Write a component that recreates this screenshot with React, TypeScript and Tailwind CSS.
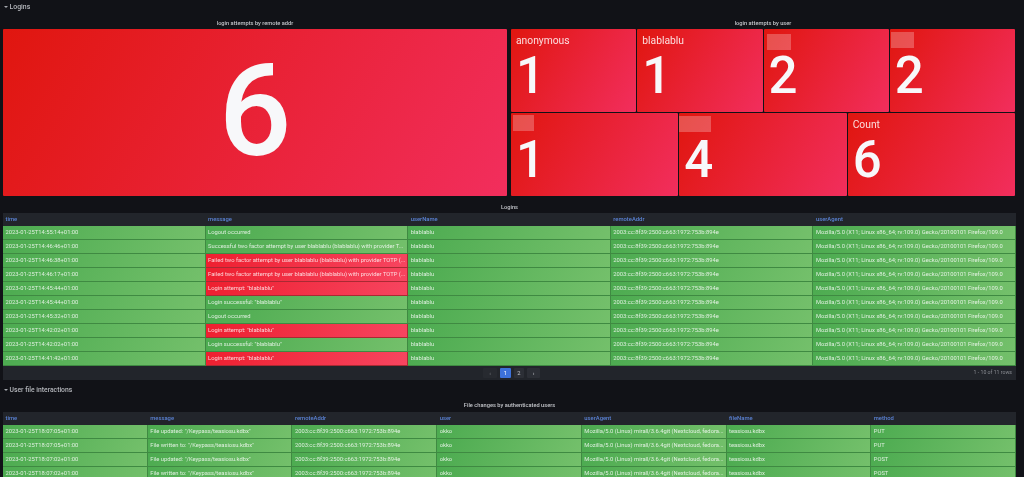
const FONT = "font-['Roboto',sans-serif]"

const LOGIN_ROWS: [string, string, boolean][] = [
  ['2023-01-25T14:55:14+01:00', 'Logout occurred', false],
  ['2023-01-25T14:46:46+01:00', 'Successful two factor attempt by user blablablu (blablablu) with provider T...', false],
  ['2023-01-25T14:46:38+01:00', 'Failed two factor attempt by user blablablu (blablablu) with provider TOTP (...', true],
  ['2023-01-25T14:46:17+01:00', 'Failed two factor attempt by user blablablu (blablablu) with provider TOTP (...', true],
  ['2023-01-25T14:45:44+01:00', 'Login attempt: "blablablu"', true],
  ['2023-01-25T14:45:44+01:00', 'Login successful: "blablablu"', false],
  ['2023-01-25T14:45:32+01:00', 'Logout occurred', false],
  ['2023-01-25T14:42:02+01:00', 'Login attempt: "blablablu"', true],
  ['2023-01-25T14:42:02+01:00', 'Login successful: "blablablu"', false],
  ['2023-01-25T14:41:42+01:00', 'Login attempt: "blablablu"', true],
]

const FILE_ROWS = [
  ['2023-01-25T18:07:05+01:00', 'File updated: "/Keypass/teasiosu.kdbx"', 'PUT'],
  ['2023-01-25T18:07:05+01:00', 'File written to: "/Keypass/teasiosu.kdbx"', 'PUT'],
  ['2023-01-25T18:07:02+01:00', 'File updated: "/Keypass/teasiosu.kdbx"', 'POST'],
  ['2023-01-25T18:07:02+01:00', 'File written to: "/Keypass/teasiosu.kdbx"', 'POST'],
]

const ADDR = '2003:cc:8f39:2500:c663:1972:753b:894e'
const UA = 'Mozilla/5.0 (X11; Linux x86_64; rv:109.0) Gecko/20100101 Firefox/109.0'
const UA_SHORT = 'Mozilla/5.0 (Linux) mirall/3.6.4git (Nextcloud, fedora...'

function Cell({ text, red }: { text: string; red?: boolean }) {
  return (
    <div className={`min-w-0 h-[14px] flex items-center pl-[2.5px] pt-[0.5px] border-r border-b overflow-hidden whitespace-nowrap text-[5.8px] text-white/80 ${
      red
        ? 'bg-[linear-gradient(120deg,#ee1f2f,#f74560)] border-[#a92a33]'
        : 'bg-[linear-gradient(120deg,#4cab50,#74c06b)] border-[#3f8a42]'
    }`}>
      {text}
    </div>
  )
}

function HeaderRow({ names, cols }: { names: string[]; cols: string }) {
  return (
    <div className={`grid ${cols} h-[13px] bg-[#22252b]`}>
      {names.map(n => (
        <div key={n} className="px-[2.5px] flex items-center text-[5.85px] font-medium text-[#5b83d6]">{n}</div>
      ))}
    </div>
  )
}

function Tile({ label, value, block }: { label?: string; value: number; block?: string }) {
  return (
    <div className="relative rounded-[1px] bg-[linear-gradient(120deg,#e0160f,#f22e5d)] text-[#f7f8fa] pl-[5px]">
      <div className="h-[18px] pt-[7px] text-[10.3px] leading-none text-white/85">{label}</div>
      {block && <div className={`absolute ${block} bg-white/25`} />}
      <div className="mt-[3px] text-[51px] leading-none font-medium">{value}</div>
    </div>
  )
}

function Caret() {
  return <span className="inline-block mr-[1.5px] mb-[1px] w-0 h-0 border-x-[2.5px] border-x-transparent border-t-[2.5px] border-t-[#a5a7ad]" />
}

export default function App() {
  return (
    <div className={`h-[477px] w-[1024px] overflow-hidden bg-[#111217] blur-[0.3px] ${FONT}`}>
      <div className="h-[14px] pl-[4px] flex items-center text-[6.9px] font-medium text-[#b5b7bc]">
        <Caret />Logins
      </div>

      <div className="flex pl-[3px] pr-[9px] gap-[4px] mt-[4px]">
        <div className="w-[504px]">
          <div className="h-[11px] flex items-center justify-center text-[5.7px] font-medium text-[#c3c5ca]">login attempts by remote addr</div>
          <div className="h-[167px] pb-[4px] flex items-center justify-center rounded-[1px] bg-[linear-gradient(120deg,#e0160f,#f22e5d)] text-[#f7f8fa] text-[128px] font-medium leading-none">6</div>
        </div>
        <div className="w-[504px]">
          <div className="h-[11px] flex items-center justify-center text-[5.7px] font-medium text-[#c3c5ca]">login attempts by user</div>
          <div className="h-[167px] flex flex-col gap-[1px]">
            <div className="grid grid-cols-4 gap-[1px] h-[83px]">
              <Tile label="anonymous" value={1} />
              <Tile label="blablablu" value={1} />
              <Tile value={2} block="left-[3px] top-[5px] w-[24px] h-[16px]" />
              <Tile value={2} block="left-[1px] top-[3px] w-[23px] h-[16px]" />
            </div>
            <div className="grid grid-cols-3 gap-[1px] h-[83px]">
              <Tile value={1} block="left-[2px] top-[2px] w-[21px] h-[16px]" />
              <Tile value={4} block="left-0 top-[3px] w-[32px] h-[16px]" />
              <Tile label="Count" value={6} />
            </div>
          </div>
        </div>
      </div>

      <div className="mt-[5px] pl-[3px] pr-[8px]">
        <div className="h-[12px] flex items-center justify-center text-[5.7px] font-medium text-[#c3c5ca]">Logins</div>
        <HeaderRow cols="grid-cols-5" names={['time', 'message', 'userName', 'remoteAddr', 'userAgent']} />
        {LOGIN_ROWS.map(([time, msg, red], i) => (
          <div key={i} className="grid grid-cols-5">
            <Cell text={time} />
            <Cell text={msg} red={red} />
            <Cell text="blablablu" />
            <Cell text={ADDR} />
            <Cell text={UA} />
          </div>
        ))}
        <div className="relative h-[14px] pl-[4px] bg-[#22252b] flex items-center justify-center gap-[3px] text-[5.8px] text-[#c3c5ca]">
          <span className="w-[14px] h-[10px] rounded-[1px] bg-[#272a30] text-[#777a80] flex items-center justify-center">‹</span>
          <span className="w-[11px] h-[10px] rounded-[1px] bg-[#3d71d9] flex items-center justify-center text-white">1</span>
          <span className="w-[10px] h-[10px] rounded-[1px] bg-[#2c2f36] flex items-center justify-center">2</span>
          <span className="w-[13px] h-[10px] rounded-[1px] bg-[#2c2f36] flex items-center justify-center">›</span>
          <span className="absolute right-[4px] text-[5.2px] text-[#8a8d93]">1 - 10 of 11 rows</span>
        </div>
      </div>

      <div className="h-[17px] mt-[2px] pl-[4px] flex items-center text-[6.8px] font-medium text-[#b5b7bc]">
        <Caret />User file interactions
      </div>

      <div className="pl-[3px] pr-[8px]">
        <div className="h-[13px] flex items-center justify-center text-[5.7px] font-medium text-[#c3c5ca]">File changes by authenticated users</div>
        <HeaderRow cols="grid-cols-7" names={['time', 'message', 'remoteAddr', 'user', 'userAgent', 'fileName', 'method']} />
        {FILE_ROWS.map(([time, msg, method], i) => (
          <div key={i} className="grid grid-cols-7">
            <Cell text={time} />
            <Cell text={msg} />
            <Cell text={ADDR} />
            <Cell text="okko" />
            <Cell text={UA_SHORT} />
            <Cell text="teasiosu.kdbx" />
            <Cell text={method} />
          </div>
        ))}
      </div>
    </div>
  )
}
